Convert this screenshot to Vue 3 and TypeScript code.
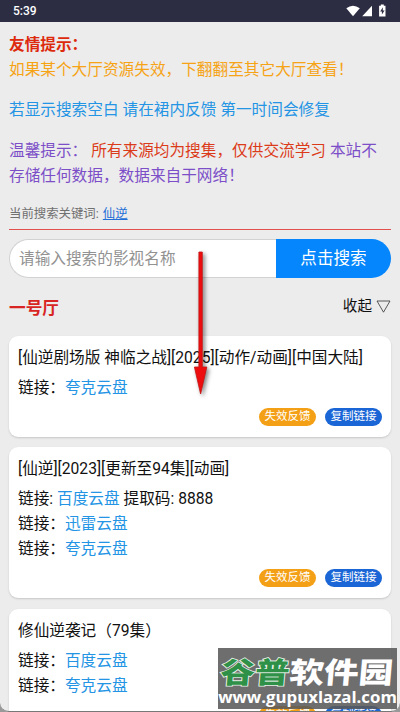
<script setup lang="ts">
interface LinkRow {
  label: string
  name: string
  code?: string
}
interface Entry {
  title: string
  links: LinkRow[]
}

const entries: Entry[] = [
  {
    title: '[仙逆剧场版 神临之战][2025][动作/动画][中国大陆]',
    links: [{ label: '链接：', name: '夸克云盘' }],
  },
  {
    title: '[仙逆][2023][更新至94集][动画]',
    links: [
      { label: '链接: ', name: '百度云盘', code: ' 提取码: 8888' },
      { label: '链接：', name: '迅雷云盘' },
      { label: '链接：', name: '夸克云盘' },
    ],
  },
  {
    title: '修仙逆袭记（79集）',
    links: [
      { label: '链接：', name: '百度云盘' },
      { label: '链接：', name: '夸克云盘' },
    ],
  },
]
</script>

<template>
  <div class="screen">
    <header class="status">
      <span class="time">5:39</span>
      <svg class="status-icons" width="42" height="14" viewBox="0 0 42 14">
        <path d="M0.3 4.2Q7 -0.8 13.8 4.2L7 12.2Z" fill="#fff" />
        <path d="M26 1.8V12.2H16.2Z" fill="#fff" />
        <path d="M34.8 0.6h3v1.2h1.7v10.6h-6.4V1.8h1.7z" fill="#fff" />
        <path d="M36.8 3.2v3.2h1.8L35.9 10.6V7.5h-1.7z" fill="#2c2d43" />
      </svg>
    </header>

    <main class="page">
      <section class="notice">
        <p class="friendly"><b>友情提示：</b><br />如果某个大厅资源失效，下翻翻至其它大厅查看！</p>
        <p class="blank">若显示搜索空白 请在裙内反馈 第一时间会修复</p>
        <p class="warm">温馨提示： <span>所有来源均为搜集，仅供交流学习</span> 本站不<br />存储任何数据，数据来自于网络！</p>
      </section>

      <div class="keyword">当前搜索关键词: <a>仙逆</a></div>

      <div class="search">
        <div class="field">请输入搜索的影视名称</div>
        <div class="submit">点击搜索</div>
      </div>

      <div class="hall">
        <h2>一号厅</h2>
        <div class="fold">
          收起
          <svg width="15" height="13" viewBox="0 0 15 13">
            <path d="M1 1H14L7.5 12.2Z" fill="none" stroke="#333" stroke-width="0.8" />
          </svg>
        </div>
      </div>

      <article v-for="entry in entries" :key="entry.title" class="card">
        <h3>{{ entry.title }}</h3>
        <div v-for="(link, i) in entry.links" :key="i" class="link">
          <span>{{ link.label }}</span><a>{{ link.name }}</a><span>{{ link.code }}</span>
        </div>
        <div class="actions">
          <span class="pill report">失效反馈</span>
          <span class="pill copy">复制链接</span>
        </div>
      </article>
    </main>

    <svg class="arrow" width="30" height="154" viewBox="0 0 30 154">
      <path d="M12.9 3H16.3V118H20.8L14.6 145L8.4 118H12.9Z" fill="#ee0d0e" stroke="#c41414" stroke-width="0.8" />
    </svg>

    <div class="watermark">
      <div class="brand"><span class="green">谷普</span><span>软件园</span></div>
      <div class="site">www.gupuxlazal.com</div>
    </div>
    <div class="frame"></div>
  </div>
</template>

<style>
body {
  background: #777;
}
</style>

<style scoped>
.screen {
  position: relative;
  width: 400px;
  height: 712px;
  overflow: hidden;
  font-family: Roboto, "Noto Sans CJK SC", sans-serif;
  font-size: 15.67px;
  line-height: 25px;
  color: #111;
  background: #ececec;
}
.status {
  display: flex;
  justify-content: space-between;
  height: 21.5px;
  box-sizing: border-box;
  padding: 0 12px 0 13px;
  background: #2c2d43;
  color: #fff;
}
.time {
  font-size: 12px;
  font-weight: 500;
  line-height: 23px;
}
.status-icons {
  margin-top: 4px;
}
.page {
  padding: 10px 9px 0;
}
.notice p {
  margin: 0 0 15.75px;
  white-space: nowrap;
}
.friendly {
  color: #f6a316;
}
.friendly b {
  color: #dd2a0c;
}
.blank {
  color: #2494e4;
}
.notice .warm {
  margin: 0;
  color: #7c4fc8;
}
.warm span {
  color: #dc3b19;
}
.keyword {
  height: 42px;
  box-sizing: border-box;
  padding-top: 13px;
  border-bottom: 1px solid #e1504c;
  font-size: 12.4px;
  color: #707070;
}
.keyword a {
  color: #1f6fd6;
  text-decoration: underline;
  margin-left: 1px;
}
.search {
  display: flex;
  height: 39px;
  margin-top: 8.5px;
}
.field {
  flex: 1;
  box-sizing: border-box;
  padding-left: 9px;
  border: 1px solid #d2d2d2;
  border-right: 0;
  border-radius: 20px 0 0 20px;
  background: #fff;
  color: #929292;
  line-height: 37px;
}
.submit {
  width: 115px;
  border-radius: 0 20px 20px 0;
  background: #0586fc;
  color: #fff;
  font-size: 16.6px;
  line-height: 39px;
  text-align: center;
}
.hall {
  display: flex;
  justify-content: space-between;
  align-items: center;
  height: 58px;
}
.hall h2 {
  margin: 3px 0 0;
  font-size: 16.7px;
  font-weight: 700;
  color: #d82423;
}
.fold {
  display: flex;
  align-items: center;
  gap: 4px;
  font-size: 14.6px;
}
.card {
  margin-bottom: 10.5px;
  padding: 9px 9px 11px;
  border-radius: 9px;
  background: #fff;
  box-shadow: 0 1px 2px rgba(0, 0, 0, 0.16);
}
.card h3 {
  margin: 0 0 5px;
  font-size: inherit;
  font-weight: 400;
  white-space: nowrap;
}
.link {
  height: 25px;
  white-space: pre;
}
.link a {
  color: #2494e4;
}
.actions {
  display: flex;
  justify-content: flex-end;
  gap: 9px;
  margin-top: 8px;
}
.pill {
  width: 57px;
  height: 18px;
  border-radius: 9px;
  color: #fff;
  font-size: 11.5px;
  line-height: 17px;
  text-align: center;
}
.report {
  background: #f4a016;
}
.copy {
  background: #1b66d6;
}
.arrow {
  position: absolute;
  left: 186px;
  top: 249px;
  filter: drop-shadow(2px 2px 2px rgba(0, 0, 0, 0.5));
}
.watermark {
  position: absolute;
  left: 218px;
  top: 648px;
  width: 179px;
  height: 61px;
  background: rgba(88, 88, 88, 0.87);
  color: #fff;
  white-space: nowrap;
}
.brand {
  display: flex;
  height: 40px;
  padding: 1px 0 0 3px;
  box-sizing: border-box;
  font-family: "Noto Sans CJK SC", sans-serif;
  font-size: 34.5px;
  font-weight: 900;
  line-height: 44px;
  transform: skewX(-5deg) scaleY(0.84);
}
.green {
  color: #2f9148;
  -webkit-text-stroke: 2px #e8f2e8;
  paint-order: stroke fill;
}
.site {
  font-family: "Open Sans", sans-serif;
  font-size: 16.8px;
  font-weight: 700;
  line-height: 17px;
  text-align: center;
}
.frame {
  position: absolute;
  inset: 0;
  top: 40px;
  border-bottom: 1px solid #777;
  border-radius: 0 0 9px 9px;
  box-shadow: 0 8px 0 8px #999;
  clip-path: inset(0);
}
</style>
